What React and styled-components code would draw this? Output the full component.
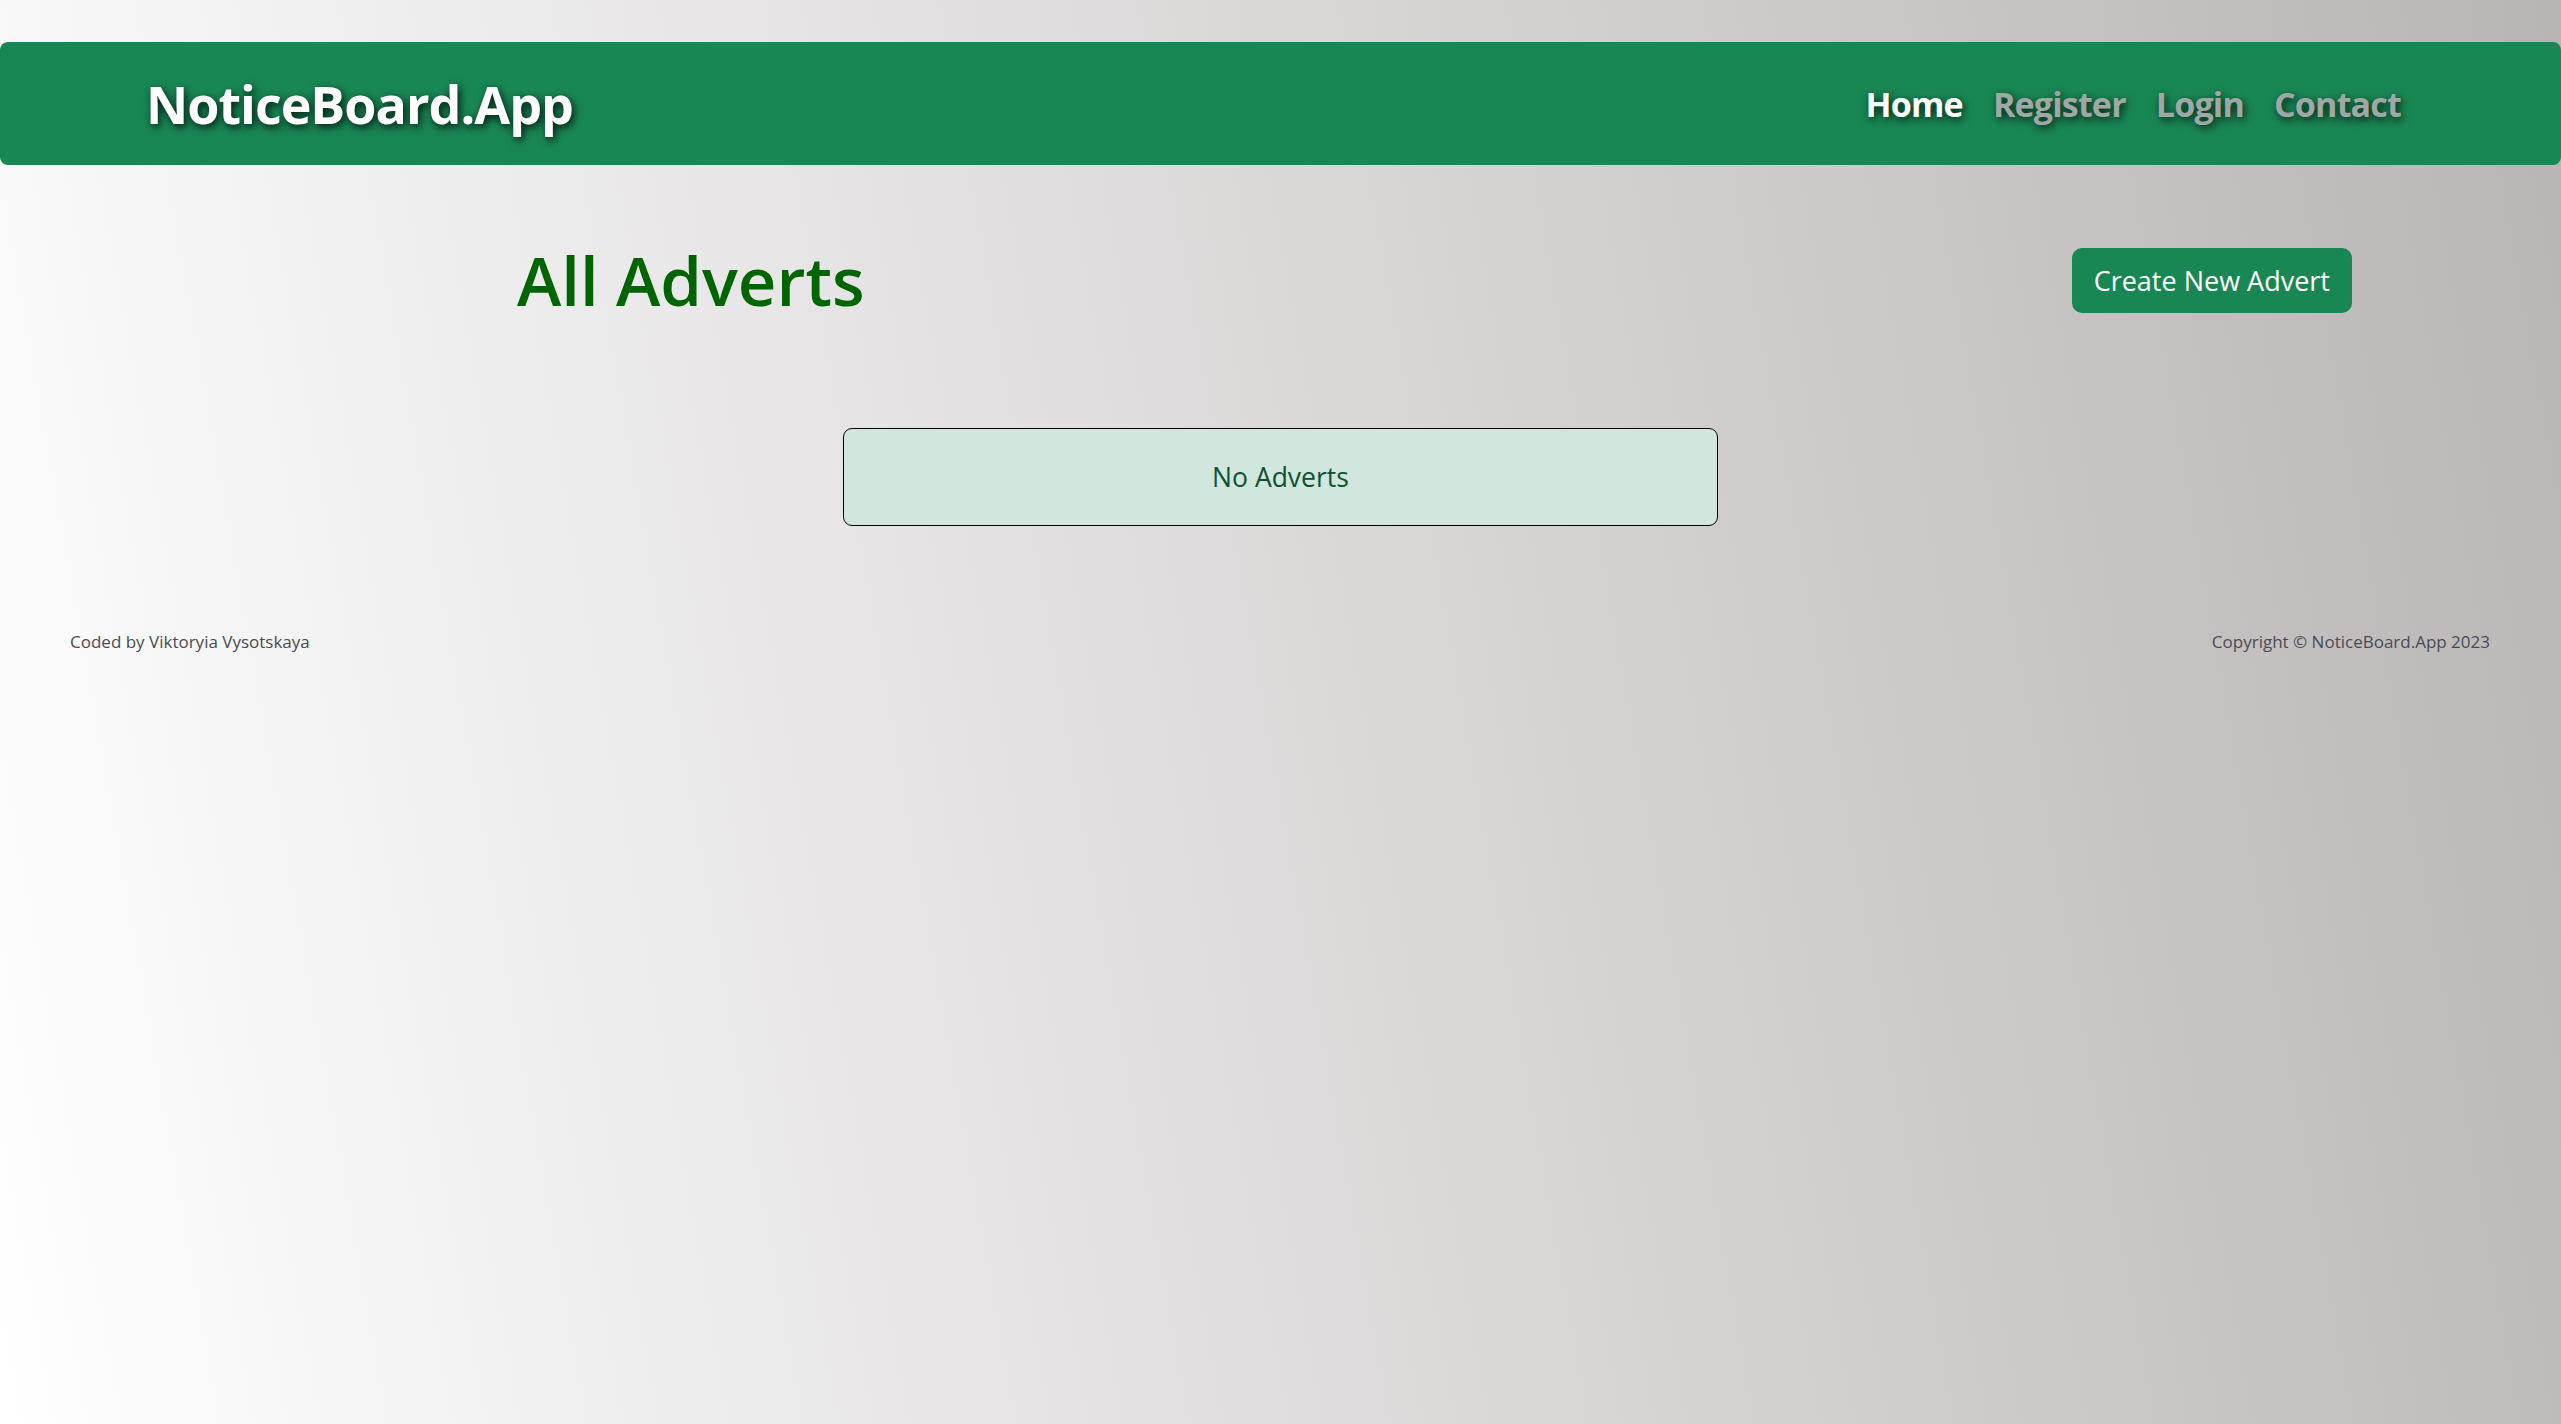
import styled, { createGlobalStyle } from 'styled-components';

const GlobalStyle = createGlobalStyle`
  html, body {
    margin: 0;
    min-height: 100%;
  }
  body {
    min-height: 100vh;
    background: linear-gradient(80deg, #ffffff 0%, #bab5b5 100%);
    font-family: "Open Sans", "Noto Sans", sans-serif;
    color: #212529;
  }
  * {
    box-sizing: border-box;
  }
`;

const Page = styled.div`
  padding-top: 42px;
`;

const Header = styled.header`
  display: flex;
  align-items: center;
  justify-content: space-between;
  height: 123px;
  padding: 0 160px 0 146px;
  border-radius: 8px;
  background-color: #198754;
`;

const Brand = styled.a`
  font-size: 52px;
  font-weight: 700;
  letter-spacing: -1px;
  color: #ffffff;
  text-decoration: none;
  text-shadow: 2px 3px 8px rgba(0, 0, 0, 0.85);
`;

const Nav = styled.nav`
  display: flex;
  align-items: center;
  gap: 30px;
`;

const NavLink = styled.a`
  font-size: 34px;
  font-weight: 700;
  letter-spacing: -0.8px;
  color: ${({ active }) => (active ? '#ffffff' : '#9fa8a4')};
  text-decoration: none;
  text-shadow: 2px 3px 8px rgba(0, 0, 0, 0.8);
`;

const Main = styled.main`
  display: flex;
  flex-direction: column;
  align-items: center;
  padding-top: 75px;
`;

const TitleRow = styled.div`
  display: flex;
  align-items: center;
  justify-content: space-between;
  width: 100%;
  padding: 0 209px 0 517px;
`;

const Title = styled.h1`
  margin: 0;
  font-size: 67px;
  font-weight: 600;
  line-height: 1.2;
  color: #006400;
`;

const Button = styled.button`
  height: 65px;
  padding: 0 22px;
  border: none;
  border-radius: 10px;
  background-color: #198754;
  color: #ffffff;
  font-family: inherit;
  font-size: 27px;
  cursor: pointer;
`;

const EmptyBox = styled.div`
  display: flex;
  align-items: center;
  justify-content: center;
  width: 875px;
  height: 98px;
  margin-top: 108px;
  border: 1.6px solid #000000;
  border-radius: 9px;
  background-color: #d1e7dd;
  color: #0f5132;
  font-size: 26.5px;
`;

const Footer = styled.footer`
  display: flex;
  justify-content: space-between;
  align-items: center;
  padding: 0 71px 0 70px;
  margin-top: 104px;
  font-size: 17px;
  color: #484b55;
`;

export default function App() {
  return (
    <>
      <GlobalStyle />
      <Page>
        <Header>
          <Brand href="#">NoticeBoard.App</Brand>
          <Nav>
            <NavLink href="#" active>Home</NavLink>
            <NavLink href="#">Register</NavLink>
            <NavLink href="#">Login</NavLink>
            <NavLink href="#">Contact</NavLink>
          </Nav>
        </Header>
        <Main>
          <TitleRow>
            <Title>All Adverts</Title>
            <Button>Create New Advert</Button>
          </TitleRow>
          <EmptyBox>No Adverts</EmptyBox>
        </Main>
        <Footer>
          <span>Coded by Viktoryia Vysotskaya</span>
          <span>Copyright © NoticeBoard.App 2023</span>
        </Footer>
      </Page>
    </>
  );
}
